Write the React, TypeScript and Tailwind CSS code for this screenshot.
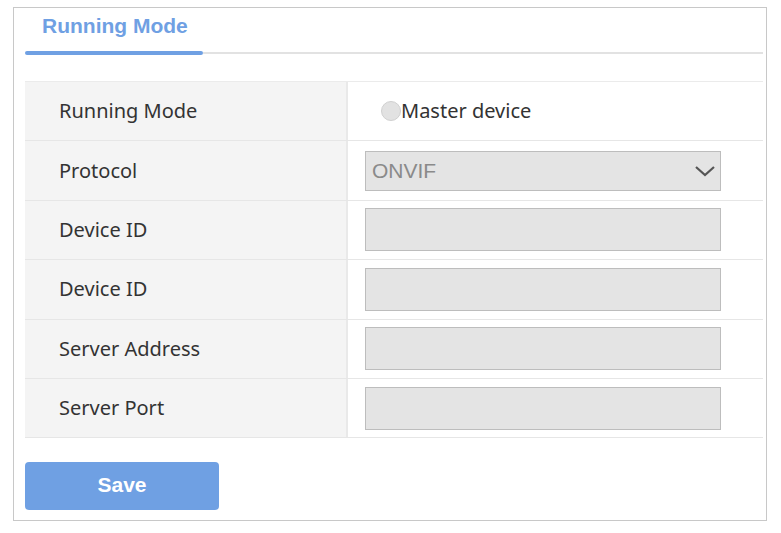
const rows = ['Device ID', 'Device ID', 'Server Address', 'Server Port'];

const label = "text-[20px] text-[#333] font-['Noto_Sans',sans-serif]";

const Row = ({ name, children }: { name: string; children: React.ReactNode }) => (
    <div className="flex h-[59.4px] border-b border-[#e6e6e6]">
        <div className="w-[323px] shrink-0 bg-[#f4f4f4] border-r-2 border-[#e9e9e9] flex items-center pl-[34px]">
            <span className={label}>{name}</span>
        </div>
        <div className="flex-1 flex items-center pl-[17px]">{children}</div>
    </div>
);

export default function App() {
    return (
        <div className="w-[781px] h-[533px] bg-white pt-[7px] pl-[13px]">
            <div className="w-[754px] h-[514px] border border-[#c8c8c8] pl-[11px] pr-[3px]">
                <div className="flex items-end h-[47px]">
                    <div className="w-[178px] h-[47px] flex flex-col justify-between">
                        <span className="pl-[17px] pt-[4px] text-[21px] leading-[28px] font-bold text-[#6fa0e3] font-['Liberation_Sans',sans-serif]">
                            Running Mode
                        </span>
                        <div className="h-[4px] bg-[#6fa0e3] rounded-[2px]" />
                    </div>
                    <div className="flex-1 h-[2px] bg-[#e2e2e2] mb-[1px]" />
                </div>
                <div className="mt-[26px] border-t border-[#ebebeb]">
                    <Row name="Running Mode">
                        <div className="flex items-center pl-[16px]">
                            <span className="w-[20px] h-[20px] rounded-full bg-[#e2e2e2] border border-[#d0d0d0]" />
                            <span className={label}>Master device</span>
                        </div>
                    </Row>
                    <Row name="Protocol">
                        <div className="w-[356px] h-[40px] bg-[#e4e4e4] border border-[#bdbdbd] flex items-center justify-between pl-[6px] pr-[4px]">
                            <span className="text-[21px] text-[#8a8a8a] font-['Liberation_Sans',sans-serif]">ONVIF</span>
                            <svg width="22" height="14" viewBox="0 0 22 14" fill="none">
                                <path d="M2 3l9 8 9-8" stroke="#555" strokeWidth="2.2" />
                            </svg>
                        </div>
                    </Row>
                    {rows.map((r, i) => (
                        <Row key={i} name={r}>
                            <div className="w-[356px] h-[43px] bg-[#e4e4e4] border border-[#bdbdbd]" />
                        </Row>
                    ))}
                </div>
                <button className="mt-[24px] w-[194px] h-[48px] pb-[3px] rounded-[4px] bg-[#6fa0e3] text-white text-[21px] font-bold font-['Liberation_Sans',sans-serif]">
                    Save
                </button>
            </div>
        </div>
    );
}
